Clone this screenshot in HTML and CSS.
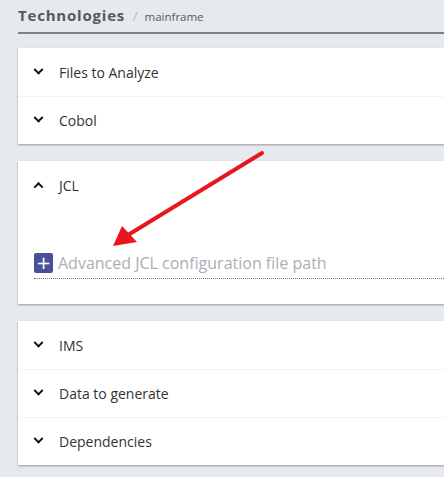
FILE: index.html
```html
<!DOCTYPE html>
<html>
<head>
<meta charset="utf-8">
<link rel="stylesheet" href="styles.css">
</head>
<body>
<div class="page">
  <div class="crumbs">
    <span class="crumb-main">Technologies</span>
    <span class="crumb-sep">/</span>
    <span class="crumb-sub">mainframe</span>
  </div>

  <div class="card">
    <div class="row"><span class="chev down"></span><span class="label">Files to Analyze</span></div>
    <div class="row"><span class="chev down"></span><span class="label">Cobol</span></div>
  </div>

  <div class="card">
    <div class="row open"><span class="chev up"></span><span class="label">JCL</span></div>
    <div class="panel">
      <div class="field">
        <span class="plus">+</span>
        <span class="placeholder">Advanced JCL configuration file path</span>
      </div>
    </div>
  </div>

  <div class="card">
    <div class="row"><span class="chev down"></span><span class="label">IMS</span></div>
    <div class="row"><span class="chev down"></span><span class="label">Data to generate</span></div>
    <div class="row"><span class="chev down"></span><span class="label">Dependencies</span></div>
  </div>
</div>

<svg class="arrow" width="444" height="477" viewBox="0 0 444 477">
  <line x1="262" y1="153" x2="128" y2="235" stroke="#e8171d" stroke-width="4" stroke-linecap="round"/>
  <polygon points="113,246 122,226 137,242" fill="#e8171d"/>
</svg>
</body>
</html>
```
FILE: styles.css
```css
html, body {
  margin: 0;
  padding: 0;
  overflow: hidden;
}
body {
  background: #e6e9ed;
  font-family: "Open Sans", "Liberation Sans", sans-serif;
  color: #222;
  width: 444px;
  height: 477px;
  position: relative;
}
.page {
  padding: 0 0 0 18px;
  margin-right: -30px;
}
.crumbs {
  display: flex;
  align-items: baseline;
  padding-top: 5px;
  box-sizing: border-box;
  height: 34px;
  border-bottom: 2px solid #7f8081;
}
.crumb-main {
  font-size: 15px;
  font-weight: 700;
  letter-spacing: 0.8px;
  color: #55595e;
}
.crumb-sep {
  font-size: 12px;
  color: #b5b8bc;
  margin-left: 8px;
}
.crumb-sub {
  font-size: 11.5px;
  color: #55595e;
  margin-left: 7px;
}
.card {
  background: #fff;
  margin-top: 14px;
  box-shadow: 0 1px 2px rgba(0,0,0,0.35);
}
.card + .card { margin-top: 17px; }
.row {
  height: 48px;
  display: flex;
  align-items: center;
  border-top: 1px solid #f3f3f3;
  box-sizing: border-box;
}
.row:first-child { border-top: none; }
.chev {
  width: 5px;
  height: 5px;
  border-right: 2.5px solid #111;
  border-bottom: 2.5px solid #111;
  margin-left: 17px;
  margin-right: 17px;
  box-sizing: content-box;
}
.chev.down { transform: rotate(45deg) translate(-2px, -2px); }
.chev.up { transform: rotate(-135deg) translate(-1px, -1px); }
.label {
  font-size: 14px;
  color: #333;
}
.panel {
  padding: 44px 0 25px 16px;
}
.field {
  display: flex;
  align-items: center;
  height: 26px;
  border-bottom: 1px dotted #777;
  box-sizing: border-box;
  padding-bottom: 6px;
}
.plus {
  width: 19px;
  height: 20px;
  background: #4b509b;
  color: #fff;
  border-radius: 2px;
  display: flex;
  align-items: center;
  justify-content: center;
  font-size: 18px;
  line-height: 1;
  font-family: "DejaVu Sans", sans-serif;
}
.placeholder {
  margin-left: 5px;
  font-size: 16px;
  color: #abaeb2;
}
.arrow {
  position: absolute;
  left: 0;
  top: 0;
  pointer-events: none;
}
```
